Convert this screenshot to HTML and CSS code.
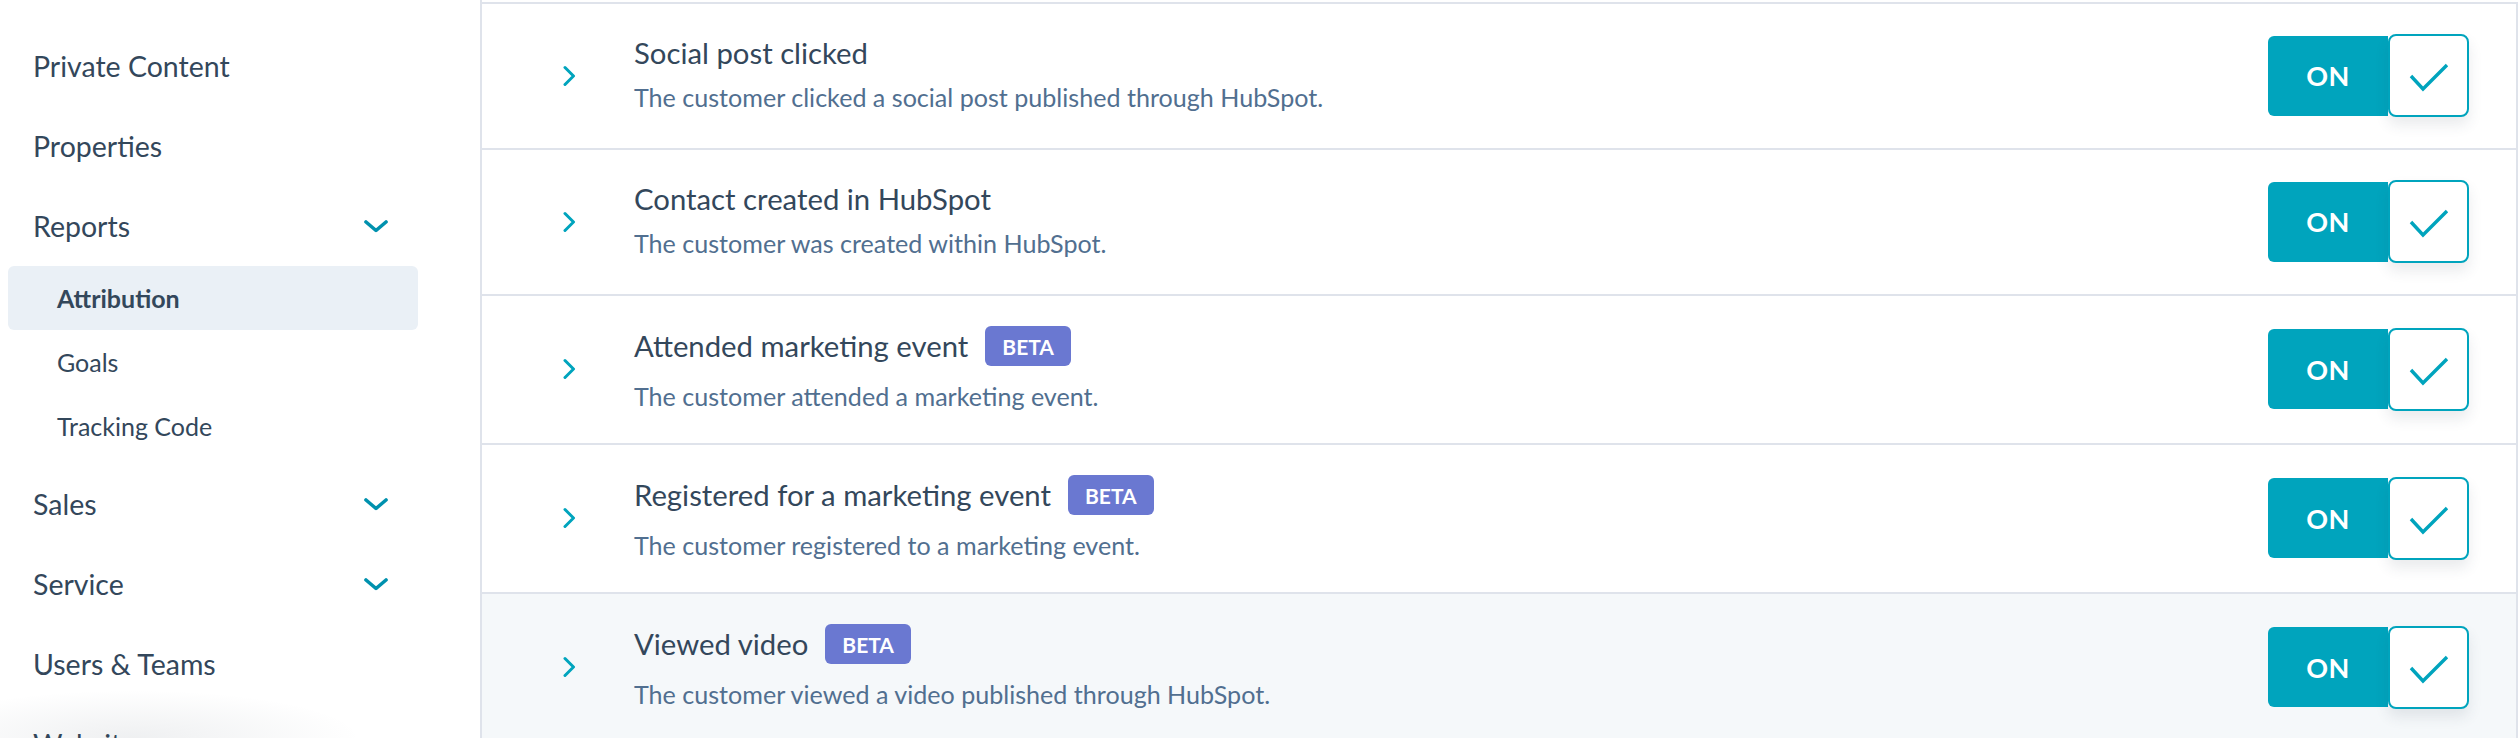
FILE: index.html
```html
<!DOCTYPE html>
<html lang="en">
<head>
<meta charset="utf-8">
<title>Settings - Attribution</title>
<link rel="stylesheet" href="styles.css">
</head>
<body>
<div class="page">
  <nav class="sidebar">
    <div class="nav-item"><span>Private Content</span></div>
    <div class="nav-item"><span>Properties</span></div>
    <div class="nav-item"><span>Reports</span>
      <svg class="caret" width="24" height="13" viewBox="0 0 24 13"><path d="M2 2 L12 10.5 L22 2" fill="none" stroke="#0091ae" stroke-width="3.6" stroke-linecap="round" stroke-linejoin="round"/></svg>
    </div>
    <div class="sub-list">
      <div class="sub-item active">Attribution</div>
      <div class="sub-item">Goals</div>
      <div class="sub-item">Tracking Code</div>
    </div>
    <div class="nav-item"><span>Sales</span>
      <svg class="caret" width="24" height="13" viewBox="0 0 24 13"><path d="M2 2 L12 10.5 L22 2" fill="none" stroke="#0091ae" stroke-width="3.6" stroke-linecap="round" stroke-linejoin="round"/></svg>
    </div>
    <div class="nav-item"><span>Service</span>
      <svg class="caret" width="24" height="13" viewBox="0 0 24 13"><path d="M2 2 L12 10.5 L22 2" fill="none" stroke="#0091ae" stroke-width="3.6" stroke-linecap="round" stroke-linejoin="round"/></svg>
    </div>
    <div class="nav-item"><span>Users &amp; Teams</span></div>
    <div class="nav-item"><span>Website</span></div>
    <div class="bottom-fade"></div>
  </nav>

  <main class="content">
    <div class="row">
      <svg class="expand" width="14" height="22" viewBox="0 0 14 22"><path d="M2 2.5 L10.5 11 L2 19.5" fill="none" stroke="#00a4bd" stroke-width="3" stroke-linecap="round" stroke-linejoin="round"/></svg>
      <div class="text">
        <div class="title-line"><span class="title">Social post clicked</span></div>
        <div class="desc">The customer clicked a social post published through HubSpot.</div>
      </div>
      <div class="toggle"><div class="on">ON</div><div class="knob"><svg width="40" height="30" viewBox="0 0 40 30"><path d="M2 13 L14 26 L38 2" fill="none" stroke="#00a4bd" stroke-width="3.4"/></svg></div></div>
    </div>

    <div class="row">
      <svg class="expand" width="14" height="22" viewBox="0 0 14 22"><path d="M2 2.5 L10.5 11 L2 19.5" fill="none" stroke="#00a4bd" stroke-width="3" stroke-linecap="round" stroke-linejoin="round"/></svg>
      <div class="text">
        <div class="title-line"><span class="title">Contact created in HubSpot</span></div>
        <div class="desc">The customer was created within HubSpot.</div>
      </div>
      <div class="toggle"><div class="on">ON</div><div class="knob"><svg width="40" height="30" viewBox="0 0 40 30"><path d="M2 13 L14 26 L38 2" fill="none" stroke="#00a4bd" stroke-width="3.4"/></svg></div></div>
    </div>

    <div class="row has-badge">
      <svg class="expand" width="14" height="22" viewBox="0 0 14 22"><path d="M2 2.5 L10.5 11 L2 19.5" fill="none" stroke="#00a4bd" stroke-width="3" stroke-linecap="round" stroke-linejoin="round"/></svg>
      <div class="text">
        <div class="title-line"><span class="title">Attended marketing event</span><span class="badge">BETA</span></div>
        <div class="desc">The customer attended a marketing event.</div>
      </div>
      <div class="toggle"><div class="on">ON</div><div class="knob"><svg width="40" height="30" viewBox="0 0 40 30"><path d="M2 13 L14 26 L38 2" fill="none" stroke="#00a4bd" stroke-width="3.4"/></svg></div></div>
    </div>

    <div class="row has-badge">
      <svg class="expand" width="14" height="22" viewBox="0 0 14 22"><path d="M2 2.5 L10.5 11 L2 19.5" fill="none" stroke="#00a4bd" stroke-width="3" stroke-linecap="round" stroke-linejoin="round"/></svg>
      <div class="text">
        <div class="title-line"><span class="title">Registered for a marketing event</span><span class="badge">BETA</span></div>
        <div class="desc">The customer registered to a marketing event.</div>
      </div>
      <div class="toggle"><div class="on">ON</div><div class="knob"><svg width="40" height="30" viewBox="0 0 40 30"><path d="M2 13 L14 26 L38 2" fill="none" stroke="#00a4bd" stroke-width="3.4"/></svg></div></div>
    </div>

    <div class="row has-badge hovered">
      <svg class="expand" width="14" height="22" viewBox="0 0 14 22"><path d="M2 2.5 L10.5 11 L2 19.5" fill="none" stroke="#00a4bd" stroke-width="3" stroke-linecap="round" stroke-linejoin="round"/></svg>
      <div class="text">
        <div class="title-line"><span class="title">Viewed video</span><span class="badge">BETA</span></div>
        <div class="desc">The customer viewed a video published through HubSpot.</div>
      </div>
      <div class="toggle"><div class="on">ON</div><div class="knob"><svg width="40" height="30" viewBox="0 0 40 30"><path d="M2 13 L14 26 L38 2" fill="none" stroke="#00a4bd" stroke-width="3.4"/></svg></div></div>
    </div>
  </main>
</div>
</body>
</html>
```

FILE: styles.css
```css
* { box-sizing: border-box; }

html, body {
  margin: 0;
  padding: 0;
  background: #ffffff;
  font-family: "Lato", "Liberation Sans", sans-serif;
  color: #33475b;
}

.page {
  display: flex;
  width: 2518px;
  height: 738px;
  overflow: hidden;
}

/* ---------- Sidebar ---------- */
.sidebar {
  position: relative;
  width: 482px;
  flex: 0 0 482px;
  border-right: 2px solid #dfe3eb;
  padding-top: 26px;
  display: flex;
  flex-direction: column;
}

.nav-item {
  height: 80px;
  flex: 0 0 80px;
  display: flex;
  align-items: center;
  justify-content: space-between;
  padding: 0 92px 0 33px;
  font-size: 28.5px;
  color: #33475b;
}

.caret { display: block; }

.sub-list {
  display: flex;
  flex-direction: column;
  margin-bottom: 6px;
}

.sub-item {
  height: 64px;
  display: flex;
  align-items: center;
  margin: 0 62px 0 8px;
  padding-left: 49px;
  font-size: 25px;
  color: #33475b;
  border-radius: 6px;
}

.sub-item.active {
  background: #eaf0f6;
  font-weight: 700;
}

.bottom-fade {
  position: absolute;
  left: 0;
  bottom: 0;
  width: 380px;
  height: 48px;
  background: radial-gradient(ellipse 60% 100% at 35% 100%, rgba(45, 62, 80, 0.08), rgba(45, 62, 80, 0) 100%);
  pointer-events: none;
}

/* ---------- Content ---------- */
.content {
  flex: 1;
  margin-top: 2px;
  border-top: 2px solid #dfe3eb;
  border-right: 2px solid #dfe3eb;
  display: flex;
  flex-direction: column;
}

.row {
  flex: 0 0 auto;
  display: flex;
  align-items: center;
  padding: 30px 47px 31px 81px;
  border-bottom: 2px solid #dfe3eb;
  background: #ffffff;
}

.row.hovered {
  background: #f5f8fa;
}

.expand {
  flex: 0 0 14px;
  margin-right: 57px;
  display: block;
}

.text {
  flex: 1;
  display: flex;
  flex-direction: column;
  gap: 10px;
  padding-bottom: 4px;
}

.row.has-badge .text {
  gap: 14px;
  padding-bottom: 0;
}

.title-line {
  display: flex;
  align-items: center;
  min-height: 36px;
  gap: 17px;
}

.title {
  font-size: 29.3px;
  line-height: 36px;
  color: #33475b;
}

.badge {
  display: inline-flex;
  align-items: center;
  justify-content: center;
  height: 40px;
  padding: 0 17px;
  border-radius: 6px;
  background: #6a78d1;
  color: #ffffff;
  font-size: 21px;
  font-weight: 700;
}

.desc {
  font-size: 25.1px;
  line-height: 32px;
  color: #516f90;
}

/* ---------- Toggle ---------- */
.toggle {
  display: flex;
  align-items: center;
  flex: 0 0 auto;
}

.on {
  width: 120px;
  height: 80px;
  background: #00a4bd;
  border-radius: 6px 0 0 6px;
  color: #ffffff;
  font-size: 27px;
  font-weight: 700;
  display: flex;
  align-items: center;
  justify-content: center;
  letter-spacing: 0.5px;
}

.knob {
  width: 81px;
  height: 83px;
  background: #ffffff;
  border: 2px solid #00a4bd;
  border-radius: 8px;
  box-shadow: 0 8px 14px rgba(45, 62, 80, 0.1);
  display: flex;
  align-items: center;
  justify-content: center;
  padding-top: 5px;
}

.knob svg { display: block; }
```
